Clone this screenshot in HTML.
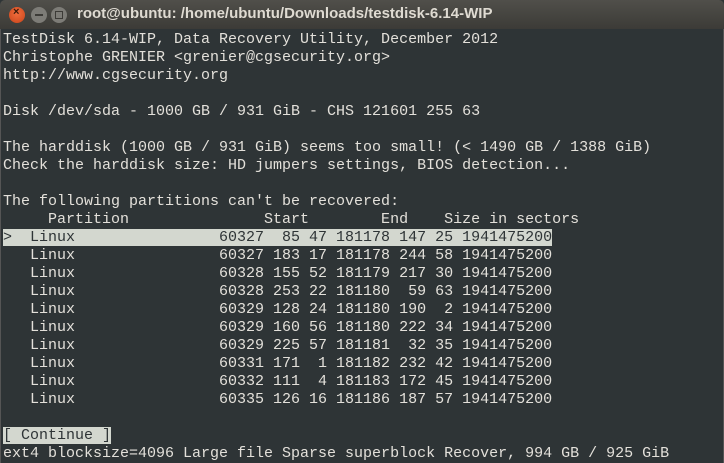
<!DOCTYPE html>
<html><head><style>
html,body{margin:0;padding:0;width:724px;height:463px;overflow:hidden;background:#2e3436;}
#title{position:absolute;left:0;top:0;width:724px;height:29px;background:linear-gradient(#504f4a,#3c3b37);border-radius:5px 5px 0 0;}
#title .t{position:absolute;left:77px;top:5px;font:bold 15px "Liberation Sans",sans-serif;color:#dfdbd2;}
.b{position:absolute;top:7px;width:16px;height:16px;border-radius:50%;}
#term{position:absolute;left:0;top:29px;width:722px;height:434px;background:#2e3436;border-left:1px solid #555;border-right:1px solid #555;}
pre{margin:0;padding:2px 0 0 2px;font:15px/18px "Liberation Mono",monospace;color:#e3e0da;white-space:pre;}
.h{background:#d3d7cf;color:#2e3436;}
</style></head><body>
<div id="title">
<div class="b" style="left:9px;background:radial-gradient(circle at 50% 40%,#f26d3d,#c8441a);"></div>
<span style="position:absolute;left:13px;top:6px;font:bold 11px 'Liberation Sans',sans-serif;color:#3a1a0a">×</span>
<div class="b" style="left:31px;background:#7d7c77;"></div>
<div style="position:absolute;left:35px;top:14px;width:8px;height:2px;background:#3c3b37"></div>
<div class="b" style="left:51px;background:#7d7c77;"></div>
<div style="position:absolute;left:55px;top:11px;width:6px;height:6px;border:1px solid #3c3b37"></div>
<span class="t">root@ubuntu: /home/ubuntu/Downloads/testdisk-6.14-WIP</span>
</div>
<div id="term"><pre>TestDisk 6.14-WIP, Data Recovery Utility, December 2012
Christophe GRENIER &lt;grenier@cgsecurity.org&gt;
http://www.cgsecurity.org

Disk /dev/sda - 1000 GB / 931 GiB - CHS 121601 255 63

The harddisk (1000 GB / 931 GiB) seems too small! (&lt; 1490 GB / 1388 GiB)
Check the harddisk size: HD jumpers settings, BIOS detection...

The following partitions can't be recovered:
     Partition               Start        End    Size in sectors
<span class="h">&gt;  Linux                60327  85 47 181178 147 25 1941475200</span>
   Linux                60327 183 17 181178 244 58 1941475200
   Linux                60328 155 52 181179 217 30 1941475200
   Linux                60328 253 22 181180  59 63 1941475200
   Linux                60329 128 24 181180 190  2 1941475200
   Linux                60329 160 56 181180 222 34 1941475200
   Linux                60329 225 57 181181  32 35 1941475200
   Linux                60331 171  1 181182 232 42 1941475200
   Linux                60332 111  4 181183 172 45 1941475200
   Linux                60335 126 16 181186 187 57 1941475200

<span class="h">[ Continue ]</span>
ext4 blocksize=4096 Large file Sparse superblock Recover, 994 GB / 925 GiB</pre></div>
</body></html>
